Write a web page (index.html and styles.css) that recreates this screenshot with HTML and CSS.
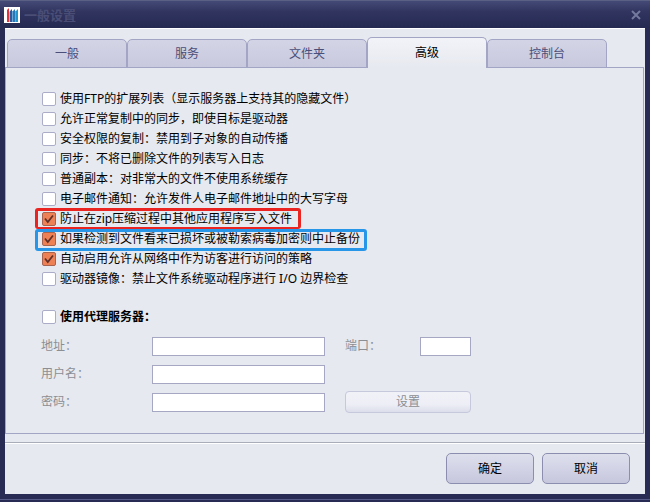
FILE: index.html
```html
<!DOCTYPE html>
<html lang="zh-Hans">
<head>
    <meta charset="UTF-8">
    <meta name="viewport" content="width=device-width, initial-scale=1.0">
    <title>一般设置</title>
    <link rel="stylesheet" href="styles.css">
</head>
<body>
    <div class="window">
        <header class="titlebar">
            <svg class="logo" viewBox="0 0 16 16" aria-hidden="true">
                <rect width="16" height="16" fill="#fff"/>
                <path d="M3 3L5 1V15H3Z" fill="#e0343c"/>
                <path d="M5 5L6 4V15H5Z" fill="#e9a0a8"/>
                <path d="M6 4L8 2V15H6Z" fill="#2d5a9c"/>
                <path d="M9 4L11 2V15H9Z" fill="#2878b8"/>
                <path d="M12 4L14 2V15H12Z" fill="#2494cc"/>
                <path d="M8.5 4V15M11.5 4V15" stroke="#6fa4d4" stroke-width="1"/>
            </svg>
            <h1>一般设置</h1>
            <button class="close" type="button" aria-label="关闭">
                <svg viewBox="0 0 10 10" aria-hidden="true"><path d="M1 1L9 9M9 1L1 9"/></svg>
            </button>
        </header>

        <form class="content">
            <nav class="tabs">
                <button type="button">一般</button>
                <button type="button">服务</button>
                <button type="button">文件夹</button>
                <button type="button" class="active">高级</button>
                <button type="button">控制台</button>
            </nav>

            <div class="panel">
                <div class="options">
                    <label><input type="checkbox">使用FTP的扩展列表（显示服务器上支持其的隐藏文件）</label>
                    <label><input type="checkbox">允许正常复制中的同步，即使目标是驱动器</label>
                    <label><input type="checkbox">安全权限的复制：禁用到子对象的自动传播</label>
                    <label><input type="checkbox">同步：不将已删除文件的列表写入日志</label>
                    <label><input type="checkbox">普通副本：对非常大的文件不使用系统缓存</label>
                    <label><input type="checkbox">电子邮件通知：允许发件人电子邮件地址中的大写字母</label>
                    <label class="mark red"><input type="checkbox" checked>防止在zip压缩过程中其他应用程序写入文件</label>
                    <label class="mark blue"><input type="checkbox" checked>如果检测到文件看来已损坏或被勒索病毒加密则中止备份</label>
                    <label><input type="checkbox" checked>自动启用允许从网络中作为访客进行访问的策略</label>
                    <label><input type="checkbox">驱动器镜像：禁止文件系统驱动程序进行 I/O 边界检查</label>
                </div>

                <label class="proxy-toggle"><input type="checkbox">使用代理服务器：</label>
                <div class="proxy">
                    <label for="host">地址：</label>
                    <input type="text" id="host" disabled>
                    <label for="port" class="port-label">端口：</label>
                    <input type="text" id="port" disabled>
                    <label for="user">用户名：</label>
                    <input type="text" id="user" disabled>
                    <label for="pass" class="row-start">密码：</label>
                    <input type="password" id="pass" disabled>
                    <button type="button" class="set" disabled>设置</button>
                </div>
            </div>

            <footer class="actions">
                <button type="button">确定</button>
                <button type="button">取消</button>
            </footer>
        </form>
    </div>
</body>
</html>
```

FILE: styles.css
```css
* {
    box-sizing: border-box;
}
body {
    margin: 0;
    font: 12px/20px "Noto Sans", "Noto Sans CJK SC", sans-serif;
    color: #000;
}
button,
input {
    font: inherit;
    margin: 0;
    padding: 0;
}
.window {
    display: flex;
    flex-direction: column;
    min-height: 100vh;
    padding: 0 5px 8px;
    background: #282c54;
    border-top: 1px solid #5a6084;
    box-shadow: inset 0 -2px #282c54, inset 0 -3px #555a86;
}

/* title bar */
.titlebar {
    display: flex;
    align-items: center;
    gap: 4px;
    height: 27px;
    margin: 0 -5px;
    padding: 0 9px 0 4px;
    background: linear-gradient(#444a76, #30345f 40%, #252a52);
}
.logo {
    width: 16px;
    height: 16px;
}
h1 {
    flex: 1;
    margin: 0;
    font-size: 13px;
    font-weight: bold;
    color: #4a4e76;
}
.close {
    width: 10px;
    height: 10px;
    border: 0;
    background: none;
}
.close svg {
    display: block;
    stroke: #747a9e;
    stroke-width: 2;
}

/* tabs */
.content {
    flex: 1;
    display: flex;
    flex-direction: column;
    background: #e6e9ef;
    border-top: 1px solid #fff;
}
.tabs {
    display: flex;
    align-items: flex-end;
    height: 39px;
    padding: 0 38px 0 2px;
}
.tabs button {
    flex: 1;
    height: 29px;
    border: 1px solid #a3a5c4;
    border-radius: 5px 5px 0 0;
    background: linear-gradient(#d3d4e5, #c8c9de);
    color: #4b4e78;
}
.tabs .active {
    position: relative;
    height: 31px;
    border-bottom: 0;
    background: linear-gradient(#f2f3f9, #e6e9ef);
    color: #000;
}

/* advanced page */
.panel {
    flex: 1;
    margin: -1px 1px 0 0;
    padding: 21px 36px 20px 35px;
    border: 1px solid #a3a5c4;
}
.options {
    display: flex;
    flex-direction: column;
    align-items: flex-start;
    padding-left: 1px;
}
.options label,
.proxy-toggle {
    display: flex;
    align-items: center;
    gap: 4px;
    height: 20px;
    white-space: nowrap;
}
input[type="checkbox"] {
    appearance: none;
    width: 14px;
    height: 14px;
    border: 1px solid #abadc8;
    border-radius: 2px;
    background: #fff;
}
input[type="checkbox"]:checked {
    border-color: #a8634f;
    background: #ee8055 url('data:image/svg+xml,<svg xmlns="http://www.w3.org/2000/svg" viewBox="0 0 12 12"><path d="M2 5.5L4.8 9L10 2.5" fill="none" stroke="%23603028" stroke-width="1.8"/></svg>');
}
.mark {
    position: relative;
}
.mark::after {
    content: "";
    position: absolute;
    border-radius: 3px;
}
.red::after {
    inset: -1px -9px 0 -7px;
    border: 3px solid #ea2420;
    border-bottom-width: 2px;
}
.blue::after {
    inset: 0 -7px -2px -7px;
    border: 3px solid #2896e8;
}

/* proxy settings */
.proxy-toggle {
    margin-top: 18px;
    padding-left: 1px;
    font-weight: bold;
}
.proxy {
    display: grid;
    grid-template-columns: 111px 173px 95px 51px;
    grid-auto-rows: 20px;
    row-gap: 8px;
    align-items: center;
    margin-top: 9px;
    color: #8c8e94;
}
.port-label,
.set {
    margin-left: 20px;
}
.proxy input {
    width: 100%;
    height: 19px;
    border: 1px solid #a5a7c3;
    background: #fff;
}
.row-start {
    grid-column: 1;
}
.set {
    grid-column: 3 / 5;
    height: 22px;
    border: 1px solid #c6c8dc;
    border-radius: 4px;
    background: linear-gradient(#f1f2f8, #eeeff6 60%, #dcdeeb);
    color: #8c8e94;
}

/* bottom buttons */
.actions {
    display: flex;
    justify-content: flex-end;
    gap: 8px;
    margin-top: 8px;
    padding: 10px 15px;
    border-top: 1px solid #a9adb9;
    box-shadow: inset 0 1px #fff;
}
.actions button {
    width: 88px;
    height: 31px;
    border: 1px solid #8c8eb0;
    border-radius: 5px;
    background: linear-gradient(#dedfed, #c6c7dd);
}
```
